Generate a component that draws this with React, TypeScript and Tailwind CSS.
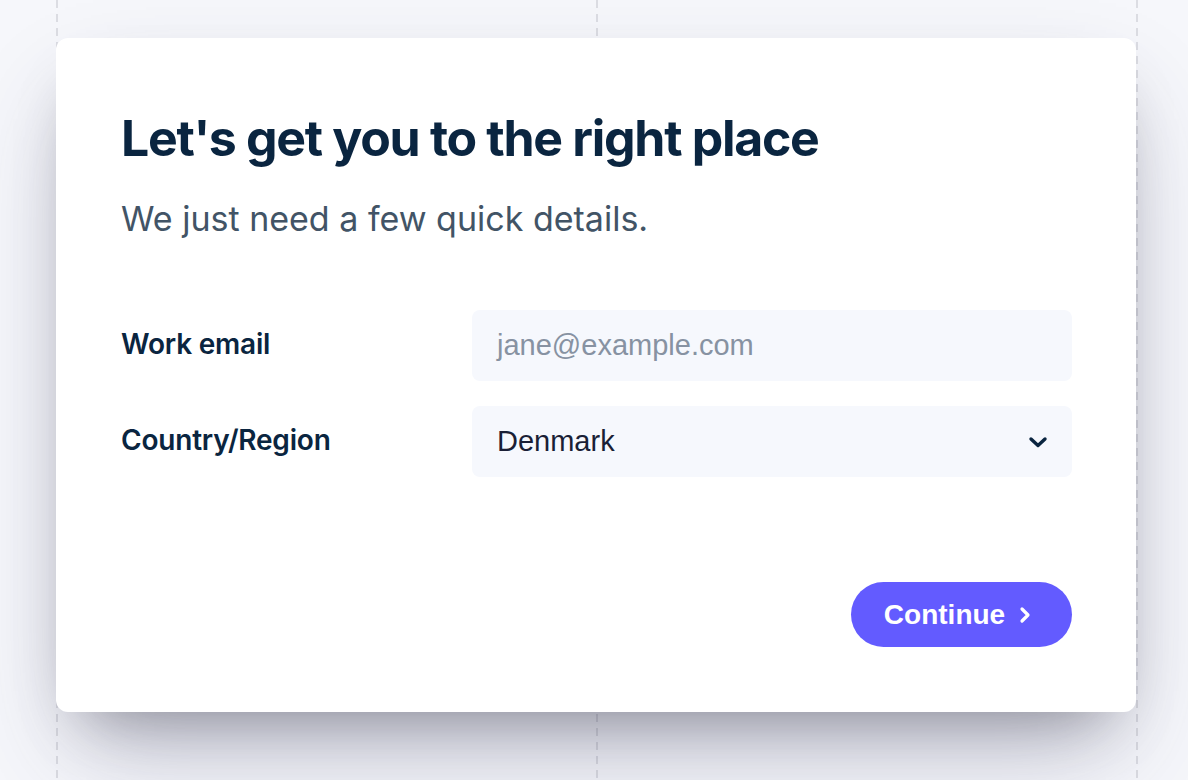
import React from "react";

export default function App() {
  return (
    <div className="relative min-h-[780px] w-[1188px] overflow-hidden bg-[#f6f7fb]">
      {/* dashed guide lines */}
      <div className="pointer-events-none absolute inset-0">
        <div className="absolute top-0 bottom-0 left-[56px] w-[2px] bg-[repeating-linear-gradient(to_bottom,#dcdde3_0px,#dcdde3_8px,transparent_8px,transparent_14px)]" />
        <div className="absolute top-0 bottom-0 left-[596px] w-[2px] bg-[repeating-linear-gradient(to_bottom,#dcdde3_0px,#dcdde3_8px,transparent_8px,transparent_14px)]" />
        <div className="absolute top-0 bottom-0 left-[1136px] w-[2px] bg-[repeating-linear-gradient(to_bottom,#dcdde3_0px,#dcdde3_8px,transparent_8px,transparent_14px)]" />
      </div>

      <div className="relative pt-[38px] pl-[56px]">
        <div className="w-[1080px] rounded-[12px] bg-white pl-[65px] pr-[64px] pt-[70px] pb-[65px] shadow-[0_50px_100px_-20px_rgba(50,50,93,0.3),0_30px_60px_-30px_rgba(0,0,0,0.35)]">
          <h1 className="font-['Inter',sans-serif] text-[50px] font-bold leading-[60px] tracking-[-1.3px] text-[#0a2540]">
            Let's get you to the right place
          </h1>
          <p className="mt-[29px] font-['Inter',sans-serif] text-[34px] leading-[44px] text-[#425466]">
            We just need a few quick details.
          </p>

          <div className="mt-[69px] flex flex-col gap-[25px]">
            <div className="flex items-center">
              <label className="w-[351px] pb-[3px] font-['Inter',sans-serif] text-[28px] font-semibold leading-[34px] tracking-[-0.2px] text-[#0a2540]">
                Work email
              </label>
              <div className="flex h-[71px] w-[600px] items-center rounded-[8px] bg-[#f6f8fd] px-[25px]">
                <span className="font-['Liberation_Sans',Arial,sans-serif] text-[29px] text-[#8792a2]">
                  jane@example.com
                </span>
              </div>
            </div>
            <div className="flex items-center">
              <label className="w-[351px] pb-[3px] font-['Inter',sans-serif] text-[28px] font-semibold leading-[34px] tracking-[-0.2px] text-[#0a2540]">
                Country/Region
              </label>
              <div className="flex h-[71px] w-[600px] items-center justify-between rounded-[8px] bg-[#f6f8fd] pl-[25px] pr-[24px]">
                <span className="font-['Liberation_Sans',Arial,sans-serif] text-[29px] text-[#1a1f36]">
                  Denmark
                </span>
                <svg width="20" height="14" viewBox="0 0 20 14" fill="none">
                  <path d="M3 4l7 6.5L17 4" stroke="#0a2540" strokeWidth="3.4" strokeLinecap="round" strokeLinejoin="round" />
                </svg>
              </div>
            </div>
          </div>

          <div className="mt-[105px] flex justify-end">
            <button className="flex h-[65px] w-[221px] items-center justify-center gap-[14px] rounded-full bg-[#635bff] pr-[8px] font-['Liberation_Sans',Arial,sans-serif] text-[28px] font-bold text-white">
              <span>Continue</span>
              <svg width="12" height="18" viewBox="0 0 12 18" fill="none">
                <path d="M3 3l6 6-6 6" stroke="#ffffff" strokeWidth="3.2" strokeLinecap="round" strokeLinejoin="round" />
              </svg>
            </button>
          </div>
        </div>
      </div>
    </div>
  );
}
